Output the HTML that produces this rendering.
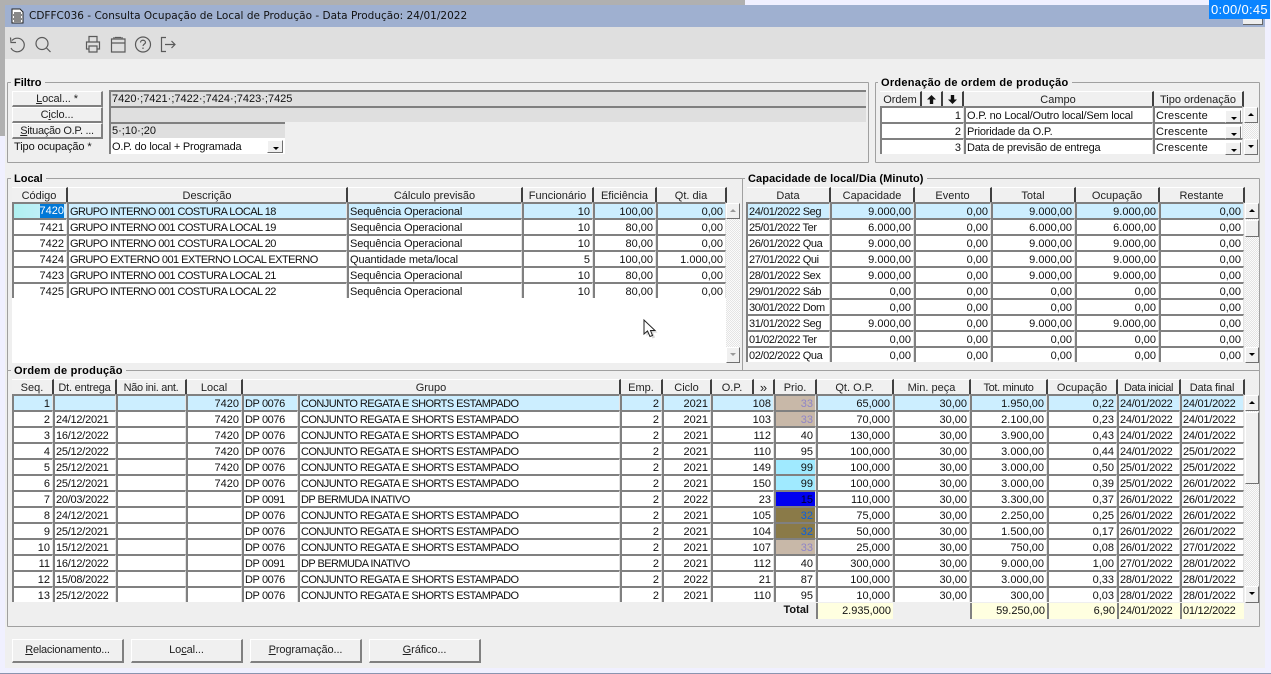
<!DOCTYPE html>
<html><head><meta charset="utf-8"><style>
*{box-sizing:border-box}
html,body{margin:0;padding:0}
body{width:1271px;height:674px;position:relative;overflow:hidden;background:#f0f0ff;font:11px/14px "Liberation Sans",sans-serif;color:#111}
.a{position:absolute}
.fs{position:absolute;border:1px solid #a0a0a0;border-radius:1px}
.lg{position:absolute;background:#efefef;font-weight:bold;padding:0 3px;height:13px;line-height:15px;color:#000;white-space:nowrap}
table{position:absolute;border-collapse:separate;border-spacing:0;table-layout:fixed}
td{height:16px;padding:2px 2px 0 1px;border-top:2px solid #808080;border-left:2px solid #808080;border-bottom:0;border-right:1px solid #e4e4e4;background:#fff;white-space:nowrap;overflow:hidden;line-height:12px;text-align:right}
td.l{text-align:left}
tr.s td{background:#cceeff}
.h{position:absolute;background:#f0f0f0;border-top:1px solid #fff;border-right:2px solid #404040;border-bottom:1px solid #a0a0a0;text-align:center;height:16px;line-height:16px;white-space:nowrap;color:#222}
.b{position:absolute;background:#f0f0f0;border-top:1px solid #fff;border-left:1px solid #fff;border-right:2px solid #808080;border-bottom:2px solid #808080;text-align:center;white-space:nowrap;letter-spacing:-.1px;color:#222}
.f{position:absolute;background:#dfdfdf;border-top:2px solid #808080;border-left:2px solid #808080;padding-left:1px;height:16px;line-height:15px;white-space:nowrap}
.sb{position:absolute;width:14px;height:16px;background:#f0f0f0;border-top:1px solid #fff;border-left:1px solid #fff;border-right:1px solid #707070;border-bottom:1px solid #707070}
.up:after,.dn:after{content:"";position:absolute;left:3px;top:5px;border-left:3px solid transparent;border-right:3px solid transparent}
.up:after{border-bottom:3px solid #000}
.dn:after{border-top:3px solid #000}
.dis:after{border-top-color:#999;border-bottom-color:#999}
.tr{position:absolute;width:14px;background:repeating-conic-gradient(#e4e4e4 0 25%,#fbfbfb 0 50%) 0 0/2px 2px}
.cb{position:absolute;width:16px;height:13px;background:#f0f0f0;border-top:1px solid #fff;border-left:1px solid #fff;border-right:1px solid #707070;border-bottom:1px solid #707070}
.cb:after{content:"";position:absolute;left:5px;top:6px;border-left:3px solid transparent;border-right:3px solid transparent;border-top:3px solid #000}
u{text-decoration:underline}
#T td:nth-child(2){letter-spacing:-.2px}
#T td:nth-child(3){letter-spacing:.2px}
#L td:nth-child(2),#L td:nth-child(3){text-align:left}
#L td:nth-child(2){letter-spacing:-.55px}
#L td:nth-child(3){letter-spacing:-.1px}
#C td:nth-child(1){text-align:left;letter-spacing:-.4px}
#O td:nth-child(2),#O td:nth-child(5),#O td:nth-child(6),#O td:nth-child(15),#O td:nth-child(16){text-align:left}
#O td:nth-child(2),#O td:nth-child(15),#O td:nth-child(16){letter-spacing:-.25px}
#O td:nth-child(5){letter-spacing:-.4px}
#O td:nth-child(6){letter-spacing:-.56px}
#O tr.p3 td:nth-child(10){background:#c8b8a8;color:#8f85c8}
#O tr.p9 td:nth-child(10){background:#a0eaff}
#O tr.p1 td:nth-child(10){background:#0000f0;color:#000030}
#O tr.p2 td:nth-child(10){background:#8a7a48;color:#0a5fe0}
.y{position:absolute;background:#ffffe0;height:16px;line-height:17px;border-left:2px solid #808080;padding:0 2px 0 1px;text-align:right;white-space:nowrap}
</style></head><body>
<div class="a" style="left:0;top:0;width:745px;height:5px;background:#b0b0b0"></div>
<div class="a" style="left:0;top:0;width:5px;height:136px;background:#b0b0b0"></div>
<div class="a" style="left:5px;top:5px;width:1260px;height:22px;background:#9fb0d0"></div>
<div class="a" style="left:5px;top:27px;width:1260px;height:32px;background:#dfdfdf"></div>
<div class="a" style="left:5px;top:59px;width:1260px;height:609px;background:#efefef"></div>
<div class="a" style="left:0;top:673px;width:1271px;height:1px;background:#8a94b0"></div>
<svg class="a" style="left:11px;top:8px" width="13" height="16" viewBox="0 0 13 16"><path d="M1 1H9L12 4V15H1Z" fill="#fff" stroke="#222"/><path d="M3 5H10M2 7H11M3 9H10M2 11H11M3 13H10" stroke="#111" stroke-width="1"/></svg>
<div class="a" style="left:29px;top:8px;font:10.5px/16px 'DejaVu Sans',sans-serif;color:#111;white-space:nowrap;letter-spacing:.01px">CDFFC036 - Consulta Ocupação de Local de Produção - Data Produção: 24/01/2022</div>
<div class="a" style="left:1243px;top:17px;width:20px;height:8px;background:#eee;border-right:1px solid #666;border-bottom:1px solid #666"></div>
<div class="a" style="left:1209px;top:0;width:61px;height:19px;background:#0a84ff;color:#fff;font:13px/20px 'Liberation Sans',sans-serif;text-align:center;white-space:nowrap;letter-spacing:.3px">0:00/0:45</div>
<svg class="a" style="left:0;top:28px" width="190" height="32" viewBox="0 0 190 32" fill="none" stroke="#5a5a5a" stroke-width="1.2">
<path d="M12 12.500A7 6.800 0 1 1 11 20M10.500 9.500L11 14.500H16"/>
<circle cx="42" cy="15.500" r="6"/><path d="M46.500 20L50.500 24"/>
<path d="M89 14V8.500H97V14M88.500 21H86.500V14H99.500V21H97.500M89 18H97V24H89Z"/>
<path d="M111.500 11H125V24H111.500ZM111.500 15H125M114 9V11M122 9V11M115 9.500H121"/>
<circle cx="143" cy="16.500" r="7.500"/><path d="M140.500 14.500C140.500 11.500 145.500 11.500 145.500 14.500C145.500 16 143 16 143 18M143 19.500V21"/>
<path d="M166 9.500H161.500V23.500H166M165 16.500H175M171.500 13L175 16.500L171.500 20"/>
</svg>

<div class="fs" style="left:7px;top:82px;width:862px;height:81px"></div>
<div class="lg" style="left:11px;top:76px">Filtro</div>
<div class="b" style="left:12px;top:91px;width:91px;height:16px;line-height:14px"><u>L</u>ocal... *</div>
<div class="b" style="left:12px;top:107px;width:91px;height:16px;line-height:14px">C<u>i</u>clo...</div>
<div class="b" style="left:12px;top:123px;width:91px;height:16px;line-height:14px;letter-spacing:-.3px"><u>S</u>ituação O.P. ...</div>
<div class="a" style="left:14px;top:140px;height:14px;letter-spacing:-.1px">Tipo ocupação *</div>
<div class="f" style="left:109px;top:90px;width:757px">7420·;7421·;7422·;7424·;7423·;7425</div>
<div class="f" style="left:109px;top:106px;width:757px"></div>
<div class="f" style="left:109px;top:122px;width:176px">5·;10·;20</div>
<div class="f" style="left:109px;top:138px;width:176px;background:#fff;border-top:0;padding-top:2px;line-height:14px;letter-spacing:-.2px">O.P. do local + Programada</div>
<div class="cb" style="left:267px;top:140px"></div>

<div class="fs" style="left:875px;top:82px;width:385px;height:81px"></div>
<div class="lg" style="left:878px;top:76px;letter-spacing:.28px">Ordenação de ordem de produção</div>
<div class="h" style="left:880px;top:91px;width:42px">Ordem</div>
<div class="h" style="left:922px;top:91px;width:21px"><svg class="a" style="left:5px;top:3px" width="9" height="9" viewBox="0 0 8 8"><path d="M4 0L8 4H5.500V8H2.500V4H0Z" fill="#111"/></svg></div>
<div class="h" style="left:943px;top:91px;width:21px"><svg class="a" style="left:5px;top:3px" width="9" height="9" viewBox="0 0 8 8"><path d="M4 8L8 4H5.500V0H2.500V4H0Z" fill="#111"/></svg></div>
<div class="h" style="left:964px;top:91px;width:190px">Campo</div>
<div class="h" style="left:1154px;top:91px;width:90px">Tipo ordenação</div>
<table id="T" style="left:880px;top:106px;width:363px"><colgroup><col style="width:84px"><col style="width:189px"><col style="width:90px"></colgroup>
<tr><td>1</td><td class="l">O.P. no Local/Outro local/Sem local</td><td class="l">Crescente</td></tr>
<tr><td>2</td><td class="l">Prioridade da O.P.</td><td class="l">Crescente</td></tr>
<tr><td>3</td><td class="l">Data de previsão de entrega</td><td class="l">Crescente</td></tr>
</table>
<div class="cb" style="left:1225px;top:110px"></div><div class="cb" style="left:1225px;top:126px"></div><div class="cb" style="left:1225px;top:142px"></div>
<div class="sb up" style="left:1244px;top:107px"></div><div class="tr" style="left:1244px;top:123px;height:16px"></div><div class="sb dn" style="left:1244px;top:139px"></div>

<div class="fs" style="left:7px;top:178px;width:736px;height:193px"></div>
<div class="fs" style="left:742px;top:178px;width:518px;height:193px"></div>
<div class="lg" style="left:11px;top:172px">Local</div>
<div class="lg" style="left:745px;top:172px;letter-spacing:.1px">Capacidade de local/Dia (Minuto)</div>

<div class="h" style="left:12px;top:187px;width:56px">Código</div>
<div class="h" style="left:68px;top:187px;width:280px">Descrição</div>
<div class="h" style="left:348px;top:187px;width:175px">Cálculo previsão</div>
<div class="h" style="left:523px;top:187px;width:71px">Funcionário</div>
<div class="h" style="left:594px;top:187px;width:63px">Eficiência</div>
<div class="h" style="left:657px;top:187px;width:70px">Qt. dia</div>
<div class="a" style="left:12px;top:298px;width:714px;height:65px;background:#fff"></div>
<table id="L" style="left:12px;top:202px;width:714px"><colgroup><col style="width:55px"><col style="width:280px"><col style="width:175px"><col style="width:71px"><col style="width:63px"><col style="width:70px"></colgroup>
<tr class="s"><td style="background:linear-gradient(90deg,#b0f0f0,#cceeff)"><span style="background:#0078d7;color:#fff;display:inline-block;height:14px;margin-top:-2px;line-height:15px;vertical-align:top">7420</span></td><td>GRUPO INTERNO 001 COSTURA LOCAL 18</td><td>Sequência Operacional</td><td>10</td><td>100,00</td><td>0,00</td></tr>
<tr><td>7421</td><td>GRUPO INTERNO 001 COSTURA LOCAL 19</td><td>Sequência Operacional</td><td>10</td><td>80,00</td><td>0,00</td></tr>
<tr><td>7422</td><td>GRUPO INTERNO 001 COSTURA LOCAL 20</td><td>Sequência Operacional</td><td>10</td><td>80,00</td><td>0,00</td></tr>
<tr><td>7424</td><td>GRUPO EXTERNO 001 EXTERNO LOCAL EXTERNO</td><td>Quantidade meta/local</td><td>5</td><td>100,00</td><td>1.000,00</td></tr>
<tr><td>7423</td><td>GRUPO INTERNO 001 COSTURA LOCAL 21</td><td>Sequência Operacional</td><td>10</td><td>80,00</td><td>0,00</td></tr>
<tr><td>7425</td><td>GRUPO INTERNO 001 COSTURA LOCAL 22</td><td>Sequência Operacional</td><td>10</td><td>80,00</td><td>0,00</td></tr>
</table>
<div class="sb up dis" style="left:726px;top:203px"></div><div class="tr" style="left:726px;top:219px;height:128px"></div><div class="sb dn dis" style="left:726px;top:347px"></div>

<div class="h" style="left:747px;top:187px;width:84px">Data</div>
<div class="h" style="left:831px;top:187px;width:84px">Capacidade</div>
<div class="h" style="left:915px;top:187px;width:77px">Evento</div>
<div class="h" style="left:992px;top:187px;width:84px">Total</div>
<div class="h" style="left:1076px;top:187px;width:84px">Ocupação</div>
<div class="h" style="left:1160px;top:187px;width:85px">Restante</div>
<table id="C" style="left:746px;top:202px;width:498px"><colgroup><col style="width:84px"><col style="width:84px"><col style="width:77px"><col style="width:84px"><col style="width:84px"><col style="width:85px"></colgroup>
<tr class="s"><td>24/01/2022 Seg</td><td>9.000,00</td><td>0,00</td><td>9.000,00</td><td>9.000,00</td><td>0,00</td></tr>
<tr><td>25/01/2022 Ter</td><td>6.000,00</td><td>0,00</td><td>6.000,00</td><td>6.000,00</td><td>0,00</td></tr>
<tr><td>26/01/2022 Qua</td><td>9.000,00</td><td>0,00</td><td>9.000,00</td><td>9.000,00</td><td>0,00</td></tr>
<tr><td>27/01/2022 Qui</td><td>9.000,00</td><td>0,00</td><td>9.000,00</td><td>9.000,00</td><td>0,00</td></tr>
<tr><td>28/01/2022 Sex</td><td>9.000,00</td><td>0,00</td><td>9.000,00</td><td>9.000,00</td><td>0,00</td></tr>
<tr><td>29/01/2022 Sáb</td><td>0,00</td><td>0,00</td><td>0,00</td><td>0,00</td><td>0,00</td></tr>
<tr><td>30/01/2022 Dom</td><td>0,00</td><td>0,00</td><td>0,00</td><td>0,00</td><td>0,00</td></tr>
<tr><td>31/01/2022 Seg</td><td>9.000,00</td><td>0,00</td><td>9.000,00</td><td>9.000,00</td><td>0,00</td></tr>
<tr><td>01/02/2022 Ter</td><td>0,00</td><td>0,00</td><td>0,00</td><td>0,00</td><td>0,00</td></tr>
<tr><td>02/02/2022 Qua</td><td>0,00</td><td>0,00</td><td>0,00</td><td>0,00</td><td>0,00</td></tr>
</table>
<div class="sb up" style="left:1245px;top:203px"></div><div class="tr" style="left:1245px;top:219px;height:128px"></div><div class="sb" style="left:1245px;top:220px;height:17px"></div><div class="sb dn" style="left:1245px;top:347px"></div>

<div class="fs" style="left:7px;top:370px;width:1253px;height:257px"></div>
<div class="lg" style="left:11px;top:364px;letter-spacing:.25px">Ordem de produção</div>
<div class="h" style="left:12px;top:379px;width:42px">Seq.</div>
<div class="h" style="left:54px;top:379px;width:63px;letter-spacing:-.2px">Dt. entrega</div>
<div class="h" style="left:117px;top:379px;width:70px;letter-spacing:-.3px">Não ini. ant.</div>
<div class="h" style="left:187px;top:379px;width:56px">Local</div>
<div class="h" style="left:243px;top:379px;width:378px">Grupo</div>
<div class="h" style="left:621px;top:379px;width:42px">Emp.</div>
<div class="h" style="left:663px;top:379px;width:49px">Ciclo</div>
<div class="h" style="left:712px;top:379px;width:42px">O.P.</div>
<div class="h" style="left:754px;top:379px;width:21px;font-size:13px">»</div>
<div class="h" style="left:775px;top:379px;width:42px">Prio.</div>
<div class="h" style="left:817px;top:379px;width:77px">Qt. O.P.</div>
<div class="h" style="left:894px;top:379px;width:77px">Min. peça</div>
<div class="h" style="left:971px;top:379px;width:77px;letter-spacing:-.35px">Tot. minuto</div>
<div class="h" style="left:1048px;top:379px;width:70px">Ocupação</div>
<div class="h" style="left:1118px;top:379px;width:63px;letter-spacing:-.4px">Data inicial</div>
<div class="h" style="left:1181px;top:379px;width:64px;letter-spacing:-.2px">Data final</div>
<table id="O" style="left:12px;top:394px;width:1232px"><colgroup><col style="width:41px"><col style="width:63px"><col style="width:70px"><col style="width:56px"><col style="width:56px"><col style="width:322px"><col style="width:42px"><col style="width:49px"><col style="width:63px"><col style="width:42px"><col style="width:77px"><col style="width:77px"><col style="width:77px"><col style="width:70px"><col style="width:63px"><col style="width:64px"></colgroup>
<tr class="s p3"><td>1</td><td></td><td></td><td>7420</td><td>DP 0076</td><td>CONJUNTO REGATA E SHORTS ESTAMPADO</td><td>2</td><td>2021</td><td>108</td><td>33</td><td>65,000</td><td>30,00</td><td>1.950,00</td><td>0,22</td><td>24/01/2022</td><td>24/01/2022</td></tr>
<tr class="p3"><td>2</td><td>24/12/2021</td><td></td><td>7420</td><td>DP 0076</td><td>CONJUNTO REGATA E SHORTS ESTAMPADO</td><td>2</td><td>2021</td><td>103</td><td>33</td><td>70,000</td><td>30,00</td><td>2.100,00</td><td>0,23</td><td>24/01/2022</td><td>24/01/2022</td></tr>
<tr><td>3</td><td>16/12/2022</td><td></td><td>7420</td><td>DP 0076</td><td>CONJUNTO REGATA E SHORTS ESTAMPADO</td><td>2</td><td>2021</td><td>112</td><td>40</td><td>130,000</td><td>30,00</td><td>3.900,00</td><td>0,43</td><td>24/01/2022</td><td>24/01/2022</td></tr>
<tr><td>4</td><td>25/12/2022</td><td></td><td>7420</td><td>DP 0076</td><td>CONJUNTO REGATA E SHORTS ESTAMPADO</td><td>2</td><td>2021</td><td>110</td><td>95</td><td>100,000</td><td>30,00</td><td>3.000,00</td><td>0,44</td><td>24/01/2022</td><td>25/01/2022</td></tr>
<tr class="p9"><td>5</td><td>25/12/2021</td><td></td><td>7420</td><td>DP 0076</td><td>CONJUNTO REGATA E SHORTS ESTAMPADO</td><td>2</td><td>2021</td><td>149</td><td>99</td><td>100,000</td><td>30,00</td><td>3.000,00</td><td>0,50</td><td>25/01/2022</td><td>25/01/2022</td></tr>
<tr class="p9"><td>6</td><td>25/12/2021</td><td></td><td>7420</td><td>DP 0076</td><td>CONJUNTO REGATA E SHORTS ESTAMPADO</td><td>2</td><td>2021</td><td>150</td><td>99</td><td>100,000</td><td>30,00</td><td>3.000,00</td><td>0,39</td><td>25/01/2022</td><td>26/01/2022</td></tr>
<tr class="p1"><td>7</td><td>20/03/2022</td><td></td><td></td><td>DP 0091</td><td>DP BERMUDA INATIVO</td><td>2</td><td>2022</td><td>23</td><td>15</td><td>110,000</td><td>30,00</td><td>3.300,00</td><td>0,37</td><td>26/01/2022</td><td>26/01/2022</td></tr>
<tr class="p2"><td>8</td><td>24/12/2021</td><td></td><td></td><td>DP 0076</td><td>CONJUNTO REGATA E SHORTS ESTAMPADO</td><td>2</td><td>2021</td><td>105</td><td>32</td><td>75,000</td><td>30,00</td><td>2.250,00</td><td>0,25</td><td>26/01/2022</td><td>26/01/2022</td></tr>
<tr class="p2"><td>9</td><td>25/12/2021</td><td></td><td></td><td>DP 0076</td><td>CONJUNTO REGATA E SHORTS ESTAMPADO</td><td>2</td><td>2021</td><td>104</td><td>32</td><td>50,000</td><td>30,00</td><td>1.500,00</td><td>0,17</td><td>26/01/2022</td><td>26/01/2022</td></tr>
<tr class="p3"><td>10</td><td>15/12/2021</td><td></td><td></td><td>DP 0076</td><td>CONJUNTO REGATA E SHORTS ESTAMPADO</td><td>2</td><td>2021</td><td>107</td><td>33</td><td>25,000</td><td>30,00</td><td>750,00</td><td>0,08</td><td>26/01/2022</td><td>27/01/2022</td></tr>
<tr><td>11</td><td>16/12/2022</td><td></td><td></td><td>DP 0091</td><td>DP BERMUDA INATIVO</td><td>2</td><td>2021</td><td>112</td><td>40</td><td>300,000</td><td>30,00</td><td>9.000,00</td><td>1,00</td><td>27/01/2022</td><td>28/01/2022</td></tr>
<tr><td>12</td><td>15/08/2022</td><td></td><td></td><td>DP 0076</td><td>CONJUNTO REGATA E SHORTS ESTAMPADO</td><td>2</td><td>2022</td><td>21</td><td>87</td><td>100,000</td><td>30,00</td><td>3.000,00</td><td>0,33</td><td>28/01/2022</td><td>28/01/2022</td></tr>
<tr><td>13</td><td>25/12/2022</td><td></td><td></td><td>DP 0076</td><td>CONJUNTO REGATA E SHORTS ESTAMPADO</td><td>2</td><td>2021</td><td>110</td><td>95</td><td>10,000</td><td>30,00</td><td>300,00</td><td>0,03</td><td>28/01/2022</td><td>28/01/2022</td></tr>
</table>
<div class="sb up" style="left:1245px;top:395px"></div><div class="tr" style="left:1245px;top:411px;height:175px"></div><div class="sb" style="left:1245px;top:412px;height:72px"></div><div class="sb dn" style="left:1245px;top:586px;height:17px"></div>
<div class="a" style="left:769px;top:603px;width:40px;text-align:right;font-weight:bold;line-height:15px">Total</div>
<div class="y" style="left:816px;top:603px;width:77px">2.935,000</div>
<div class="y" style="left:970px;top:603px;width:77px">59.250,00</div>
<div class="y" style="left:1047px;top:603px;width:70px">6,90</div>
<div class="y" style="left:1117px;top:603px;width:63px;text-align:left;letter-spacing:-.25px">24/01/2022</div>
<div class="y" style="left:1180px;top:603px;width:64px;text-align:left;letter-spacing:-.25px">01/12/2022</div>

<div class="b" style="left:12px;top:639px;width:112px;height:24px;line-height:21px;letter-spacing:-.25px"><u>R</u>elacionamento...</div>
<div class="b" style="left:131px;top:639px;width:112px;height:24px;line-height:21px">Lo<u>c</u>al...</div>
<div class="b" style="left:250px;top:639px;width:112px;height:24px;line-height:21px"><u>P</u>rogramação...</div>
<div class="b" style="left:369px;top:639px;width:112px;height:24px;line-height:21px"><u>G</u>ráfico...</div>

<svg class="a" style="left:642px;top:318px" width="18" height="22" viewBox="0 0 18 22"><path d="M3 3V17L6.500 14L9 19.500L11.500 18.500L9.500 13.500H14Z" fill="#bbb" opacity=".6" transform="translate(1.500 1)"/><path d="M2 2V16L5.500 13L8 18.500L10.500 17.500L8.500 12.500H13Z" fill="#fff" stroke="#222" stroke-width="1"/></svg>
</body></html>
